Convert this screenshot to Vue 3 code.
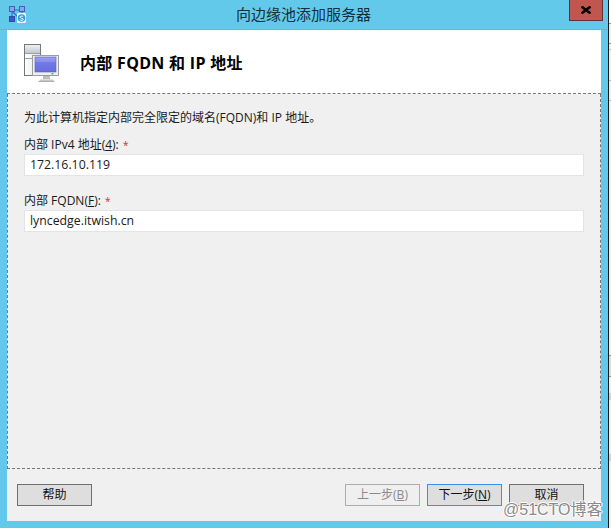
<script setup>
const fields = [
  { label: '内部 IPv4 地址(', key: '4', value: '172.16.10.119' },
  { label: '内部 FQDN(', key: 'F', value: 'lyncedge.itwish.cn' }
]
</script>

<template>
  <div class="screen">
    <div class="window">
      <div class="titlebar">
        <svg class="app-icon" width="17" height="18" viewBox="0 0 17 18">
          <path d="M3 6v7M13 6v5M5 5l6 0M4 7l5 5" stroke="#3f66c4" stroke-width="1.2" fill="none" />
          <rect x="0.5" y="1.5" width="5" height="5" fill="#8aa4e4" stroke="#3c62c0" />
          <rect x="10.5" y="1.5" width="5" height="5" fill="#8aa4e4" stroke="#3c62c0" />
          <rect x="0.5" y="11.5" width="5" height="5" fill="#3a5cc0" stroke="#2c4aa8" />
          <rect x="8" y="8" width="9" height="10" rx="1.5" fill="#eaf6fc" />
          <circle cx="12.5" cy="13" r="3.8" fill="#1ba3e2" />
          <path d="M14.2 11.6c-.9-.8-3.3-.7-3.3.5 0 1.4 3.4.8 3.4 2.2 0 1.2-2.5 1.3-3.6.4" stroke="#fff" stroke-width="1" fill="none" />
        </svg>
        <div class="title">向边缘池添加服务器</div>
        <div class="close">
          <svg width="10" height="8" viewBox="0 0 10 8">
            <path d="M0.5 0.5l9 7M9.5 0.5l-9 7" stroke="#000" stroke-width="2.5" />
          </svg>
        </div>
      </div>
      <div class="client">
        <header class="head">
          <svg class="head-icon" width="36" height="39" viewBox="0 0 36 39">
            <defs>
              <linearGradient id="tower" x1="0" y1="0" x2="1" y2="0">
                <stop offset="0" stop-color="#ffffff" />
                <stop offset="1" stop-color="#dfe2e6" />
              </linearGradient>
              <linearGradient id="band" x1="0" y1="0" x2="0" y2="1">
                <stop offset="0" stop-color="#eef0f2" />
                <stop offset="1" stop-color="#c4c8ce" />
              </linearGradient>
              <linearGradient id="glass" x1="0" y1="0" x2="0" y2="1">
                <stop offset="0" stop-color="#9aa0f0" />
                <stop offset="0.3" stop-color="#8a90ea" />
                <stop offset="0.31" stop-color="#757be6" />
                <stop offset="1" stop-color="#666ce0" />
              </linearGradient>
              <linearGradient id="foot" x1="0" y1="0" x2="0" y2="1">
                <stop offset="0" stop-color="#e8e8e8" />
                <stop offset="1" stop-color="#a4a4a4" />
              </linearGradient>
            </defs>
            <rect x="0.5" y="0.5" width="16" height="31" fill="url(#tower)" stroke="#737880" />
            <rect x="1" y="1" width="15" height="8" fill="url(#band)" />
            <path d="M1 9.5h15M1 14.5h15" stroke="#9a9fa6" />
            <rect x="8.5" y="11.5" width="26" height="20" fill="#efefef" stroke="#9a9da0" />
            <rect x="11" y="13" width="21" height="15" fill="url(#glass)" stroke="#5a5fc0" stroke-width="0.6" />
            <rect x="27.5" y="29" width="2" height="1.5" fill="#32c850" />
            <rect x="19" y="32" width="7" height="3" fill="#bcbcbc" />
            <path d="M14 38l3-3h11l3 3z" fill="url(#foot)" />
          </svg>
          <h1 class="head-title">内部 FQDN 和 IP 地址</h1>
        </header>
        <main class="body">
          <p class="intro">为此计算机指定内部完全限定的域名(FQDN)和 IP 地址。</p>
          <div v-for="f in fields" :key="f.key" class="field">
            <label class="label">{{ f.label }}<u>{{ f.key }}</u>): <span class="req">*</span></label>
            <div class="input">{{ f.value }}</div>
          </div>
        </main>
        <footer class="foot">
          <button class="btn">帮助</button>
          <div class="nav">
            <button class="btn off">上一步(<u>B</u>)</button>
            <button class="btn primary">下一步(<u>N</u>)</button>
            <button class="btn">取消</button>
          </div>
        </footer>
      </div>
    </div>
    <div class="strip">
      <div class="s s1"></div>
      <div class="s s2"></div>
      <div class="s s3"></div>
      <div class="s s4"></div>
      <div class="s s5"></div>
      <div class="s s6"></div>
    </div>
    <div class="mark">@51CTO博客</div>
  </div>
</template>

<style scoped>
.screen {
  position: relative;
  display: flex;
  width: 611px;
  height: 528px;
  overflow: hidden;
  font-family: "Open Sans", "Noto Sans CJK SC", sans-serif;
  font-size: 12px;
  color: #1a1a1a;
}
.window {
  width: 608px;
  display: flex;
  flex-direction: column;
  background: #63c9ea;
}
.titlebar {
  position: relative;
  flex: none;
  height: 30px;
  display: flex;
  align-items: center;
  justify-content: center;
  border-bottom: 1px solid #6fb4cc;
  box-sizing: border-box;
}
.app-icon {
  position: absolute;
  left: 9px;
  top: 5px;
}
.title {
  font-size: 15px;
  color: #10303c;
  margin-left: -1px;
  margin-top: -2px;
}
.close {
  position: absolute;
  left: 569px;
  top: 0;
  width: 34px;
  height: 21px;
  box-sizing: border-box;
  display: flex;
  align-items: center;
  justify-content: center;
  background: #c0564e;
  border: 1px solid #5f3434;
  border-top: none;
}
.client {
  flex: 1;
  margin: 0 7px 7px;
  display: flex;
  flex-direction: column;
  background: #f0f0f0;
}
.head {
  flex: none;
  height: 64px;
  box-sizing: border-box;
  background: #fff;
  border-bottom: 1px dashed #777;
  display: flex;
  align-items: flex-start;
}
.head-icon {
  margin: 14px 0 0 17px;
}
.head-title {
  margin: 21px 0 0 20px;
  font-size: 16px;
  line-height: 24px;
  font-weight: 700;
  letter-spacing: 0.3px;
  color: #000;
  white-space: nowrap;
}
.body {
  flex: 1;
  box-sizing: border-box;
  padding: 15px 16px 0;
  border-left: 1px dashed #777;
  border-right: 1px dashed #777;
  border-bottom: 1px dashed #777;
}
.intro {
  margin: 0;
  line-height: 18px;
  white-space: nowrap;
}
.field {
  margin-top: 9px;
}
.field + .field {
  margin-top: 16px;
}
.label {
  display: block;
  line-height: 18px;
  height: 18px;
  white-space: nowrap;
}
.req {
  color: #e0203c;
  font-size: 10px;
  margin-left: 1px;
}
.input {
  height: 22px;
  box-sizing: border-box;
  background: #fff;
  border: 1px solid #e3e3e8;
  padding-left: 5px;
  line-height: 20px;
  font-size: 12.3px;
}
.foot {
  flex: none;
  height: 52px;
  box-sizing: border-box;
  padding: 15px 17px 0 10px;
  display: flex;
  justify-content: space-between;
  align-items: flex-start;
}
.nav {
  display: flex;
  gap: 7px;
}
.btn {
  width: 75px;
  height: 22px;
  box-sizing: border-box;
  padding: 0;
  font: inherit;
  line-height: 18px;
  color: #111;
  background: #dedede;
  border: 1px solid #707070;
  border-radius: 0;
}
.btn.off {
  background: #efefef;
  border-color: #adadad;
  color: #8a8a8a;
}
.btn.primary {
  border-color: #3b8fe8;
}
.strip {
  flex: 1;
  box-sizing: border-box;
  border-left: 1px solid #1a1a1a;
  background: #f0f0f0;
  display: flex;
  flex-direction: column;
}
.s { flex: none; }
.s1 {
  height: 23px;
  background: #ffffff;
}
.s2 {
  height: 21px;
  border-top: 1px solid #999;
  border-bottom: 1px solid #999;
  box-sizing: border-box;
}
.s3 {
  height: 26px;
  margin-top: 5px;
  border-top: 1px solid #bbb;
  box-sizing: border-box;
}
.s4 {
  height: 21px;
  border-top: 1px solid #bbb;
  border-bottom: 1px solid #bbb;
  box-sizing: border-box;
  margin-top: 5px;
}
.s5 {
  height: 22px;
  margin-top: 254px;
  background: #dcdcdc;
  border-top: 1px solid #999;
  border-bottom: 1px solid #999;
  box-sizing: border-box;
}
.s6 {
  height: 68px;
  margin-top: 16px;
  border-top: 7px solid #c6d8e0;
  border-bottom: 7px solid #c6d8e0;
  box-sizing: border-box;
}
.mark {
  position: absolute;
  left: 503px;
  top: 499px;
  font-family: "Liberation Sans", "Noto Sans CJK SC", sans-serif;
  font-size: 16px;
  line-height: 22px;
  color: #8a8a8a;
  white-space: nowrap;
  text-shadow: 1px 0 0 #fff, -1px 0 0 #fff, 0 1px 0 #fff, 0 -1px 0 #fff;
}
</style>
